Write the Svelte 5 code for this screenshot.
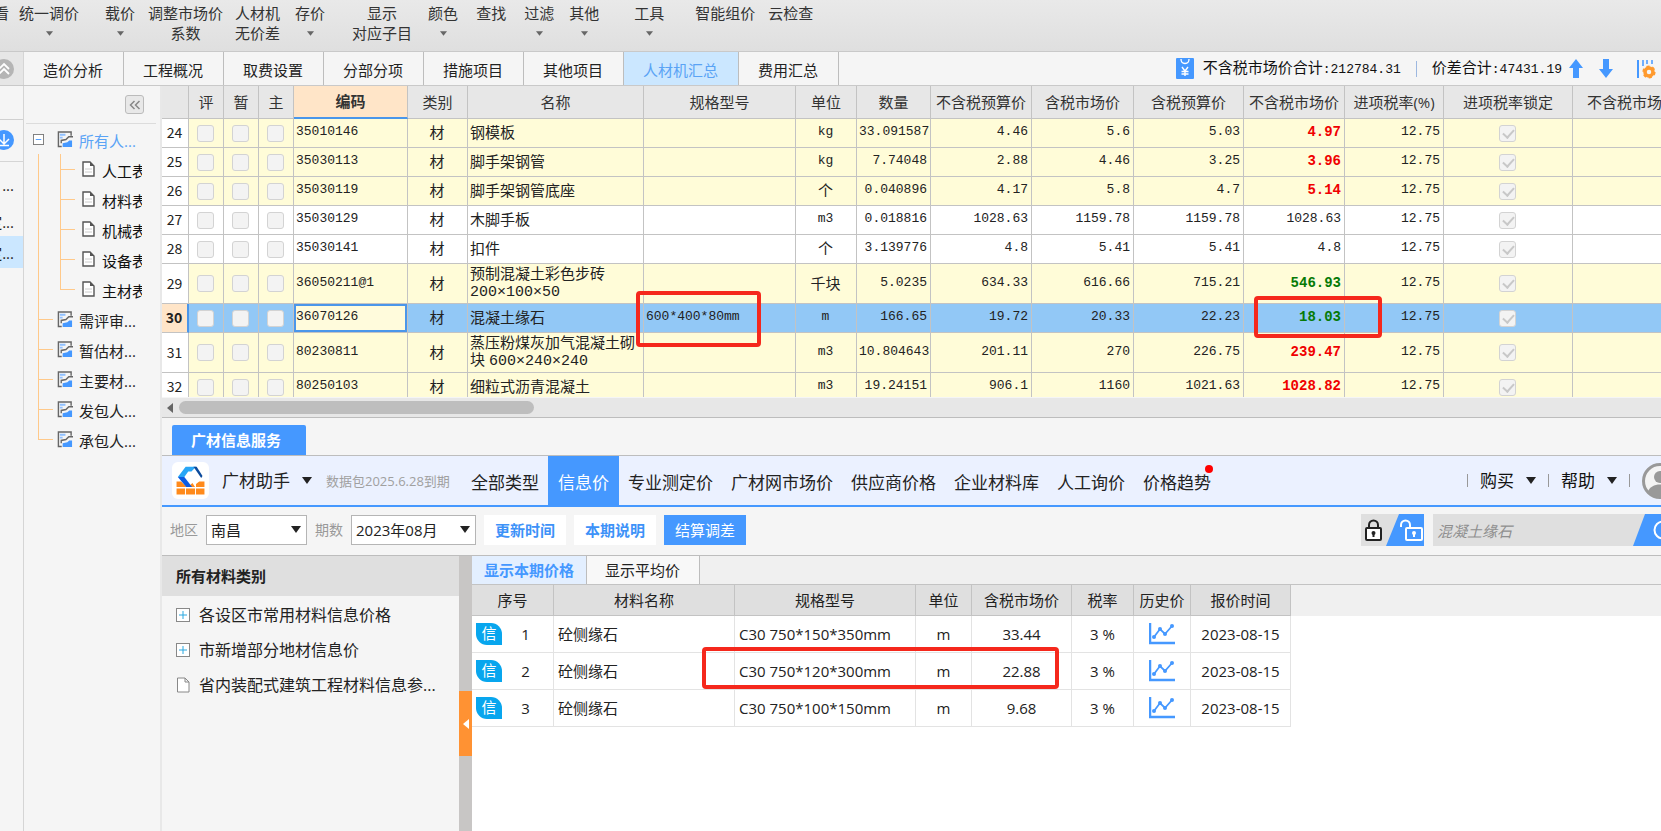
<script>
    const ribbon = [
        { lines: ["查看"], gap: 0 },
        { lines: ["统一调价"], arrow: true, gap: 10 },
        { lines: ["载价"], arrow: true, gap: 26 },
        { lines: ["调整市场价", "系数"], gap: 13 },
        { lines: ["人材机", "无价差"], gap: 12 },
        { lines: ["存价"], arrow: true, gap: 15 },
        { lines: ["显示", "对应子目"], gap: 27 },
        { lines: ["颜色"], arrow: true, gap: 16 },
        { lines: ["查找"], gap: 18 },
        { lines: ["过滤"], arrow: true, gap: 18 },
        { lines: ["其他"], arrow: true, gap: 15 },
        { lines: ["工具"], arrow: true, gap: 35 },
        { lines: ["智能组价"], gap: 31 },
        { lines: ["云检查"], gap: 13 },
    ];

    const tabs = ["造价分析", "工程概况", "取费设置", "分部分项", "措施项目", "其他项目", "人材机汇总", "费用汇总"];
    let activeTab = "人材机汇总";

    const tree = ["人工表", "材料表", "机械表", "设备表", "主材表"];
    const reports = ["需评审...", "暂估材...", "主要材...", "发包人...", "承包人..."];

    const columns = [
        { name: "", width: 27 },
        { name: "评", width: 35 },
        { name: "暂", width: 35 },
        { name: "主", width: 35 },
        { name: "编码", width: 114 },
        { name: "类别", width: 60 },
        { name: "名称", width: 176 },
        { name: "规格型号", width: 152 },
        { name: "单位", width: 61 },
        { name: "数量", width: 74 },
        { name: "不含税预算价", width: 101 },
        { name: "含税市场价", width: 102 },
        { name: "含税预算价", width: 110 },
        { name: "不含税市场价", width: 101 },
        { name: "进项税率(%)", width: 99 },
        { name: "进项税率锁定", width: 129 },
        { name: "不含税市场价合计", width: 148 },
    ];

    const rows = [
        { no: 24, code: "35010146", name: "钢模板", unit: "kg", qty: "33.091587", a: "4.46", b: "5.6", c: "5.03", d: "4.97", trend: "up" },
        { no: 25, code: "35030113", name: "脚手架钢管", unit: "kg", qty: "7.74048", a: "2.88", b: "4.46", c: "3.25", d: "3.96", trend: "up" },
        { no: 26, code: "35030119", name: "脚手架钢管底座", unit: "个", qty: "0.040896", a: "4.17", b: "5.8", c: "4.7", d: "5.14", trend: "up" },
        { no: 27, code: "35030129", name: "木脚手板", unit: "m3", qty: "0.018816", a: "1028.63", b: "1159.78", c: "1159.78", d: "1028.63" },
        { no: 28, code: "35030141", name: "扣件", unit: "个", qty: "3.139776", a: "4.8", b: "5.41", c: "5.41", d: "4.8" },
        { no: 29, code: "36050211@1", name: "预制混凝土彩色步砖", size: "200×100×50", unit: "千块", qty: "5.0235", a: "634.33", b: "616.66", c: "715.21", d: "546.93", trend: "down" },
        { no: 30, code: "36070126", name: "混凝土缘石", spec: "600*400*80mm", unit: "m", qty: "166.65", a: "19.72", b: "20.33", c: "22.23", d: "18.03", trend: "down" },
        { no: 31, code: "80230811", name: "蒸压粉煤灰加气混凝土砌块", size: "600×240×240", unit: "m3", qty: "10.804643", a: "201.11", b: "270", c: "226.75", d: "239.47", trend: "up" },
        { no: 32, code: "80250103", name: "细粒式沥青混凝土", unit: "m3", qty: "19.24151", a: "906.1", b: "1160", c: "1021.63", d: "1028.82", trend: "up" },
    ];
    let selectedRow = 30;

    const navItems = ["全部类型", "信息价", "专业测定价", "广材网市场价", "供应商价格", "企业材料库", "人工询价", "价格趋势"];
    let activeNav = "信息价";

    const categories = [
        { name: "各设区市常用材料信息价格", expandable: true },
        { name: "市新增部分地材信息价", expandable: true },
        { name: "省内装配式建筑工程材料信息参...", expandable: false },
    ];

    const priceColumns = [
        { name: "序号", width: 82 },
        { name: "材料名称", width: 181 },
        { name: "规格型号", width: 181 },
        { name: "单位", width: 56 },
        { name: "含税市场价", width: 100 },
        { name: "税率", width: 62 },
        { name: "历史价", width: 57 },
        { name: "报价时间", width: 100 },
    ];

    const prices = [
        { no: 1, spec: "C30 750*150*350mm", price: "33.44" },
        { no: 2, spec: "C30 750*120*300mm", price: "22.88", marked: true },
        { no: 3, spec: "C30 750*100*150mm", price: "9.68" },
    ];
</script>

{#snippet reportIcon()}
    <svg class="report-icon" viewBox="0 0 17 18" aria-hidden="true">
        <path d="M15 5V1H1.500v15.500H5" fill="none" stroke="#666" stroke-width="1.500" />
        <path d="M3 4h6M3 7h3" stroke="#8fc0ff" stroke-width="2" />
        <path d="M4.500 13V10l5-1 3-3H17" fill="none" stroke="#666" stroke-width="1.500" />
        <path d="M6 17v-4l5-1 2-2h3v7z" fill="#4598ff" />
    </svg>
{/snippet}

{#snippet fileIcon()}
    <svg class="file-icon" viewBox="0 0 13 16" aria-hidden="true">
        <path d="M1 1h7l4 4v10H1z" fill="#fff" stroke="#555" stroke-width="1.400" />
        <path d="M8 1v4h4z" fill="#555" />
        <path d="M3 8h7M3 11h7" stroke="#ccc" />
    </svg>
{/snippet}

{#snippet caret()}
    <svg class="caret" viewBox="0 0 10 7" aria-hidden="true"><path d="M0 0h10L5 7z" fill="#222" /></svg>
{/snippet}

<div class="app">
    <header class="ribbon">
        {#each ribbon as item}
            <button class="ribbon-item" style:margin-left="{item.gap}px">
                {#each item.lines as line}
                    <span>{line}</span>
                {/each}
                {#if item.arrow}
                    <svg class="drop" viewBox="0 0 6 4" aria-hidden="true"><path d="M0 0h6L3 4z" fill="#666" /></svg>
                {/if}
            </button>
        {/each}
    </header>

    <nav class="tabs">
        <button class="fold" aria-label="折叠">
            <svg viewBox="0 0 20 20" aria-hidden="true">
                <circle cx="10" cy="10" r="10" fill="#b5b5b5" />
                <path d="M5 10l5-5 5 5M5 15l5-5 5 5" fill="none" stroke="#fff" stroke-width="1.800" />
            </svg>
        </button>
        {#each tabs as tab}
            <button class="tab" class:active={tab === activeTab} on:click={() => (activeTab = tab)}>{tab}</button>
        {/each}
        <div class="totals">
            <svg class="bill" viewBox="0 0 18 21" aria-hidden="true">
                <rect width="18" height="21" rx="1" fill="#4598ff" />
                <path d="M5 1c0 6 8 6 8 0" fill="none" stroke="#fff" stroke-width="1.300" />
                <path d="M6 9l3 4 3-4M9 13v5M5.500 13.500h7M5.500 16h7" fill="none" stroke="#fff" stroke-width="1.400" />
            </svg>
            <span>不含税市场价合计<b>:212784.31</b></span>
            <i class="bar"></i>
            <span>价差合计<b>:47431.19</b></span>
            <svg class="arrow first" viewBox="0 0 14 19" aria-hidden="true"><path d="M7 0l7 9h-4v10H4V9H0z" fill="#4598ff" /></svg>
            <svg class="arrow second" viewBox="0 0 14 19" aria-hidden="true"><path d="M7 19l7-9h-4V0H4v10H0z" fill="#4598ff" /></svg>
            <svg class="settings" viewBox="0 0 24 20" aria-hidden="true">
                <path d="M1 1v18" stroke="#4598ff" stroke-width="2" />
                <path d="M6 1v6M10 1v4M15 1v4" stroke="#4598ff" stroke-width="1.500" />
                <circle cx="12" cy="13" r="4" fill="none" stroke="#ff9a2e" stroke-width="3.500" />
                <circle cx="12" cy="13" r="5.600" fill="none" stroke="#ff9a2e" stroke-width="2" stroke-dasharray="3 2.800" />
            </svg>
        </div>
    </nav>

    <div class="workspace">
        <aside class="rail">
            <div class="rail-top"></div>
            <div class="rail-icon">
                <svg viewBox="0 0 20 20" aria-hidden="true">
                    <circle cx="10" cy="10" r="10" fill="#4598ff" />
                    <path d="M10 4v9M5 9l5 5 5-5M5 15.500h10" fill="none" stroke="#fff" stroke-width="1.500" />
                </svg>
            </div>
            <div class="rail-row">...</div>
            <div class="rail-row">定...</div>
            <div class="rail-row current">定...</div>
        </aside>

        <aside class="tree">
            <div class="tree-head">
                <button class="collapse" aria-label="收起">
                    <svg viewBox="0 0 12 10" aria-hidden="true">
                        <path d="M5.500 1l-4 4 4 4M10.500 1l-4 4 4 4" fill="none" stroke="#888" stroke-width="1.500" />
                    </svg>
                </button>
            </div>
            <div class="root">
                <svg class="box" viewBox="0 0 12 12" aria-hidden="true">
                    <rect x=".5" y=".5" width="11" height="11" fill="#fff" stroke="#777" />
                    <path d="M3 6h6" stroke="#4598ff" />
                </svg>
                {@render reportIcon()}
                <span>所有人...</span>
            </div>
            <ul class="reports">
                <li class="nested">
                    <ul>
                        {#each tree as leaf}
                            <li class="leaf">{@render fileIcon()}<span>{leaf}</span></li>
                        {/each}
                    </ul>
                </li>
                {#each reports as report}
                    <li class="report">{@render reportIcon()}<span>{report}</span></li>
                {/each}
            </ul>
        </aside>

        <main>
            <div class="grid">
                <table>
                    <colgroup>
                        {#each columns as column}
                            <col style:width="{column.width}px" />
                        {/each}
                    </colgroup>
                    <thead>
                        <tr>
                            {#each columns as column}
                                <th class:sorted={column.name === "编码"}>{column.name}</th>
                            {/each}
                        </tr>
                    </thead>
                    <tbody>
                        {#each rows as row (row.no)}
                            <tr
                                class:plain={!row.trend}
                                class:tall={row.size}
                                class:selected={row.no === selectedRow}
                                on:click={() => (selectedRow = row.no)}
                            >
                                <td class="no">{row.no}</td>
                                <td class="center"><input type="checkbox" aria-label="评" /></td>
                                <td class="center"><input type="checkbox" aria-label="暂" /></td>
                                <td class="center"><input type="checkbox" aria-label="主" /></td>
                                <td class="num code">{row.code}</td>
                                <td class="center">材</td>
                                <td class="name">{row.name} {#if row.size}<span class="size">{row.size}</span>{/if}</td>
                                <td class="num anchor">
                                    {row.spec ?? ""}
                                    {#if row.spec}<i class="mark mark-spec"></i>{/if}
                                </td>
                                <td class="center" class:num={/^[a-z]/.test(row.unit)}>{row.unit}</td>
                                <td class="num right">{row.qty}</td>
                                <td class="num right">{row.a}</td>
                                <td class="num right">{row.b}</td>
                                <td class="num right">{row.c}</td>
                                <td class="num right anchor {row.trend ?? ''}">
                                    {row.d}
                                    {#if row.spec}<i class="mark mark-price"></i>{/if}
                                </td>
                                <td class="num right">12.75</td>
                                <td class="center"><input type="checkbox" checked disabled aria-label="锁定" /></td>
                                <td></td>
                            </tr>
                        {/each}
                    </tbody>
                </table>
            </div>
            <div class="scrollbar">
                <svg viewBox="0 0 6 10" aria-hidden="true"><path d="M6 0v10L0 5z" fill="#666" /></svg>
                <div class="thumb"></div>
            </div>

            <div class="service-tabs">
                <button>广材信息服务</button>
            </div>

            <div class="nav">
                <svg class="logo" viewBox="0 0 114 114" aria-hidden="true">
                    <rect width="114" height="114" rx="18" fill="#fff" />
                    <path d="M14 60h14l17 17H14zM49 77l14-12 8 12zM74 77V68l10-8h16v17zM14 82h26v18H14zM43 82h28v18H43zM74 82h26v18H74z" fill="#ff8a1c" />
                    <path d="M42 15h32L60 29H50L38 46H18z" fill="#29a6f6" />
                    <path d="M18 46h20l24 31H44z" fill="#0d5be0" />
                    <path d="M66 15h10l18 28-4 6z" fill="#0b4a9c" />
                </svg>
                <button class="brand">广材助手 {@render caret()}</button>
                <span class="expiry">数据包2025.6.28到期</span>
                <div class="nav-items">
                    {#each navItems as item}
                        <button class:active={item === activeNav} on:click={() => (activeNav = item)}>
                            {item}
                            {#if item === "价格趋势"}<i class="dot"></i>{/if}
                        </button>
                    {/each}
                </div>
                <div class="account">
                    <i></i>
                    <button>购买 {@render caret()}</button>
                    <i></i>
                    <button>帮助 {@render caret()}</button>
                    <i></i>
                    <svg class="avatar" viewBox="0 0 36 36" aria-hidden="true">
                        <circle cx="18" cy="18" r="16.500" fill="#f4f4f4" stroke="#999" stroke-width="3" />
                        <circle cx="18" cy="14" r="6" fill="#999" />
                        <path d="M6 29c2-10 22-10 24 0a16 16 0 0 1-24 0z" fill="#999" />
                    </svg>
                </div>
            </div>

            <div class="filters">
                <label for="area">地区</label>
                <div class="select area">
                    <select id="area"><option>南昌</option></select>
                    {@render caret()}
                </div>
                <label for="period">期数</label>
                <div class="select period">
                    <select id="period"><option>2023年08月</option></select>
                    {@render caret()}
                </div>
                <button>更新时间</button>
                <button>本期说明</button>
                <button class="primary">结算调差</button>
                <div class="search">
                    <svg class="locks" viewBox="0 0 63 32" aria-hidden="true">
                        <rect width="63" height="32" fill="#dfdfdf" />
                        <path d="M38 0h25v32H25z" fill="#4598ff" />
                        <rect x="5" y="14" width="15" height="12" rx="1" fill="#fff" stroke="#222" stroke-width="2" />
                        <path d="M8 14v-3a4.500 4.500 0 0 1 9 0v3" fill="none" stroke="#222" stroke-width="2" />
                        <path d="M12.500 18v5" stroke="#222" stroke-width="2" />
                        <circle cx="12.500" cy="19" r="2" fill="#222" />
                        <rect x="45" y="14" width="16" height="12" rx="1" fill="none" stroke="#fff" stroke-width="2" />
                        <path d="M40 13v-2a4.500 4.500 0 0 1 9 0v3" fill="none" stroke="#fff" stroke-width="2" />
                        <path d="M53 18v5" stroke="#fff" stroke-width="2" />
                        <circle cx="53" cy="19" r="2" fill="#fff" />
                    </svg>
                    <input type="text" placeholder="混凝土缘石" aria-label="搜索" />
                    <button class="go" aria-label="查询">
                        <svg viewBox="0 0 40 32" aria-hidden="true">
                            <path d="M12 0h28v32H0z" fill="#4598ff" />
                            <circle cx="30" cy="16" r="8.500" fill="none" stroke="#fff" stroke-width="2" />
                        </svg>
                    </button>
                </div>
            </div>

            <div class="bottom">
                <section class="categories">
                    <h2>所有材料类别</h2>
                    <ul>
                        {#each categories as category}
                            <li>
                                {#if category.expandable}
                                    <svg viewBox="0 0 14 16" aria-hidden="true">
                                        <rect x=".5" y="1.500" width="13" height="13" fill="#fff" stroke="#888" />
                                        <path d="M3 8h8M7 4v8" stroke="#2ba8e0" />
                                    </svg>
                                {:else}
                                    <svg viewBox="0 0 14 16" aria-hidden="true">
                                        <path d="M1.500 1H9l4 4v10H1.500z M9 1v4h4" fill="#fff" stroke="#888" />
                                    </svg>
                                {/if}
                                {category.name}
                            </li>
                        {/each}
                    </ul>
                </section>
                <div class="splitter">
                    <button aria-label="收起类别">
                        <svg viewBox="0 0 6 10" aria-hidden="true"><path d="M6 0v10L0 5z" fill="#fff" /></svg>
                    </button>
                </div>
                <section class="prices">
                    <div class="price-tabs">
                        <button class="active">显示本期价格</button>
                        <button>显示平均价</button>
                    </div>
                    <div class="price-grid">
                        <table>
                            <colgroup>
                                {#each priceColumns as column}
                                    <col style:width="{column.width}px" />
                                {/each}
                            </colgroup>
                            <thead>
                                <tr>
                                    {#each priceColumns as column}
                                        <th>{column.name}</th>
                                    {/each}
                                </tr>
                            </thead>
                            <tbody>
                                {#each prices as price (price.no)}
                                    <tr>
                                        <td class="index"><div><span class="badge">信</span><span class="seq">{price.no}</span></div></td>
                                        <td>砼侧缘石</td>
                                        <td class="anchor">
                                            {price.spec}
                                            {#if price.marked}<i class="mark mark-row"></i>{/if}
                                        </td>
                                        <td class="center">m</td>
                                        <td class="center">{price.price}</td>
                                        <td class="center">3 %</td>
                                        <td class="center">
                                            <svg class="chart" viewBox="0 0 26 23" aria-hidden="true">
                                                <path d="M1 0v20h25" fill="none" stroke="#4598ff" stroke-width="2.500" />
                                                <path d="M5 14l6-8 5 5 7-8" fill="none" stroke="#4598ff" stroke-width="1.800" />
                                                <g fill="#4598ff">
                                                    <circle cx="5" cy="14" r="2" />
                                                    <circle cx="11" cy="6" r="2" />
                                                    <circle cx="16" cy="11" r="2" />
                                                    <circle cx="23" cy="3" r="2" />
                                                </g>
                                            </svg>
                                        </td>
                                        <td class="center">2023-08-15</td>
                                    </tr>
                                {/each}
                            </tbody>
                        </table>
                    </div>
                </section>
            </div>
        </main>
    </div>
</div>

<style>
    :global(body) {
        overflow: hidden;
    }
    .app {
        height: 100vh;
        overflow: hidden;
        display: flex;
        flex-direction: column;
        background: #f5f5f5;
        color: #222;
        font: 15px/20px "Open Sans", "Noto Sans CJK SC", sans-serif;
    }
    .app :global(*) {
        box-sizing: border-box;
    }
    svg {
        display: block;
        flex: none;
    }
    button {
        font: inherit;
        color: inherit;
        border: none;
        background: none;
        padding: 0;
        white-space: nowrap;
        flex: none;
    }
    ul {
        list-style: none;
        margin: 0;
        padding: 0;
    }

    .ribbon {
        flex: none;
        display: flex;
        align-items: flex-start;
        height: 52px;
        padding-top: 3px;
        margin-left: -21px;
        background: linear-gradient(#e9e9e9, #dfdfdf);
        border-bottom: 1px solid #c9c9c9;
    }
    .ribbon-item {
        display: flex;
        flex-direction: column;
        align-items: center;
        color: #333;
    }
    .drop {
        width: 7px;
        height: 5px;
        margin-top: 8px;
    }

    .tabs {
        flex: none;
        display: flex;
        height: 34px;
        border-bottom: 1px solid #c9c9c9;
    }
    .fold {
        width: 24px;
        background: #e6e6e6;
        border-right: 1px solid #d5d5d5;
    }
    .fold svg {
        width: 20px;
        margin-left: -6px;
    }
    .tab {
        padding: 3px 20px 0 19px;
        border-right: 1px solid #bdbdbd;
    }
    .tab.active {
        background: #cbe7ff;
        color: #5aa3f5;
    }
    .totals {
        flex: 1;
        min-width: 0;
        display: flex;
        align-items: center;
        justify-content: flex-end;
        white-space: nowrap;
        gap: 9px;
        color: #111;
    }
    .totals b {
        font: 13px/20px "Liberation Mono", monospace;
    }
    .bill {
        width: 18px;
        height: 21px;
    }
    .bar {
        width: 1px;
        height: 16px;
        margin: 0 6px;
        background: #9db8e0;
    }
    .arrow {
        width: 14px;
        height: 19px;
    }
    .first {
        margin-left: -2px;
    }
    .second {
        margin: 0 15px 0 7px;
    }
    .settings {
        width: 24px;
        height: 20px;
    }

    .workspace {
        flex: 1;
        min-height: 0;
        display: flex;
    }
    .rail {
        flex: none;
        width: 24px;
        overflow: hidden;
        border-right: 1px solid #d5d5d5;
    }
    .rail-top {
        height: 34px;
        border-bottom: 1px solid #d0d0d0;
    }
    .rail-icon {
        height: 42px;
        padding: 10px 0;
        border-bottom: 1px solid #d5d5d5;
    }
    .rail-icon svg {
        width: 20px;
        margin-left: -6px;
    }
    .rail-row {
        display: flex;
        align-items: center;
        justify-content: flex-end;
        height: 37px;
        padding: 8px 9px 0 0;
    }
    .rail-row.current {
        height: 32px;
        padding-top: 2px;
        background: #cbe7ff;
    }
    .tree {
        flex: none;
        width: 138px;
        padding: 0 4px 0 2px;
        border-right: 2px solid #e8e8e8;
    }
    .tree-head {
        display: flex;
        justify-content: flex-end;
        height: 38px;
        padding: 9px 12px 0 0;
        border-bottom: 1px solid #dcdcdc;
    }
    .collapse {
        display: grid;
        place-items: center;
        width: 19px;
        height: 19px;
        border: 1px solid #bbb;
        border-radius: 3px;
        background: #e8e8e8;
    }
    .collapse svg {
        width: 12px;
        height: 10px;
    }
    .root {
        display: flex;
        align-items: center;
        height: 30px;
        padding-left: 7px;
        color: #5aa3f5;
        white-space: nowrap;
    }
    .root .box {
        width: 11px;
        height: 11px;
        margin-right: 13px;
    }
    .report-icon {
        width: 16px;
        height: 17px;
        margin-right: 6px;
    }
    .file-icon {
        width: 13px;
        height: 16px;
        margin-right: 7px;
    }
    .root span,
    .report span,
    .leaf span {
        padding-top: 4px;
    }
    .reports {
        margin-left: 12px;
        background: linear-gradient(#ffc98a, #ffc98a) 0 0 / 1px calc(100% - 15px) no-repeat;
    }
    .nested ul {
        margin-left: 22px;
        background: linear-gradient(#ffc98a, #ffc98a) 0 0 / 1px calc(100% - 15px) no-repeat;
    }
    .leaf,
    .report {
        display: flex;
        align-items: center;
        height: 30px;
        white-space: nowrap;
        background: linear-gradient(#ffc98a, #ffc98a) 0 15px / 15px 1px no-repeat;
        padding-left: 19px;
    }
    .leaf {
        padding-left: 22px;
        margin-right: 14px;
        overflow: hidden;
        color: #111;
    }

    main {
        flex: 1;
        min-width: 0;
        display: flex;
        flex-direction: column;
    }
    table {
        table-layout: fixed;
        width: 1px;
        border-collapse: separate;
        border-spacing: 0;
    }
    th,
    td {
        padding: 0 3px;
        white-space: nowrap;
        border: 0 solid #c3c3c3;
        border-width: 0 1px 1px 0;
    }
    .center {
        text-align: center;
    }
    .right {
        text-align: right;
    }
    .anchor {
        position: relative;
    }

    .grid {
        flex: none;
        height: 311px;
        overflow: hidden;
        background: #fff;
    }
    .grid th {
        height: 33px;
        padding-bottom: 1px;
        overflow: hidden;
        background: #e7e7e7;
        font-weight: 400;
        color: #333;
    }
    .grid th:last-child {
        text-align: left;
        padding-left: 14px;
    }
    .grid th.sorted {
        background: #ffe5c8;
        border-bottom: 2px solid #4a96ea;
        font-weight: 700;
    }
    .grid td {
        padding: 0 3px 2px 2px;
    }
    .grid tbody tr {
        height: 29px;
        background: #fffcd8;
    }
    .grid tbody tr.plain {
        background: #fff;
    }
    .grid tbody tr.tall {
        height: 40px;
    }
    .grid tbody tr.selected {
        background: #92c8f6;
    }
    .grid .no {
        background: #fff;
        font-family: "Noto Sans CJK SC", sans-serif;
        font-size: 14px;
        text-align: center;
    }
    .selected .no {
        background: #ffe5c8;
        border-right: 2px solid #4a96ea;
        font-weight: 700;
    }
    .selected .code {
        background: #fffbdc;
        box-shadow: inset 0 0 0 2px #4a96ea;
    }
    .num {
        font-family: "Liberation Mono", monospace;
        font-size: 13px;
    }
    .size {
        font-family: "Liberation Mono", monospace;
    }
    .name {
        line-height: 17px;
        white-space: normal;
    }
    .up,
    .down {
        font-size: 14px;
        font-weight: 700;
    }
    .up {
        color: #f00000;
    }
    .down {
        color: #067a06;
    }
    input[type="checkbox"] {
        appearance: none;
        display: block;
        width: 17px;
        height: 17px;
        margin: 2px auto 0;
        border: 1px solid #d3d3d3;
        border-radius: 3px;
        background: #f3f3f3;
    }
    input[type="checkbox"]:checked::after {
        content: "";
        display: block;
        width: 5px;
        height: 9px;
        margin: 1px 0 0 5px;
        border: solid #c8c8c8;
        border-width: 0 2px 2px 0;
        transform: rotate(42deg);
    }
    .mark {
        position: absolute;
        z-index: 1;
        border: 4px solid #f5281c;
        border-radius: 4px;
    }
    .mark-spec {
        left: -8px;
        top: -13px;
        width: 125px;
        height: 56px;
    }
    .mark-price {
        left: 10px;
        top: -8px;
        width: 128px;
        height: 42px;
    }
    .mark-row {
        left: -33px;
        top: -6px;
        width: 357px;
        height: 42px;
    }

    .scrollbar {
        flex: none;
        display: flex;
        align-items: center;
        gap: 6px;
        height: 21px;
        padding-left: 5px;
        background: #e7e7e7;
        border-bottom: 1px solid #bdbdbd;
        border-top: 1px solid #f5f5f5;
    }
    .scrollbar svg {
        width: 6px;
        height: 10px;
    }
    .thumb {
        width: 355px;
        height: 13px;
        border-radius: 7px;
        background: #bebebe;
    }

    .service-tabs {
        flex: none;
        padding: 7px 10px 0;
        border-bottom: 1px solid #bdbdbd;
    }
    .service-tabs button {
        display: block;
        height: 30px;
        padding: 0 25px 0 19px;
        border-radius: 2px 2px 0 0;
        background: #4598ff;
        color: #fff;
        font-weight: 700;
    }

    .nav {
        flex: none;
        display: flex;
        align-items: center;
        height: 51px;
        padding-left: 10px;
        background: #ebf1ff;
        border-bottom: 2px solid #4598ff;
        font-size: 17px;
    }
    .logo {
        width: 37px;
        height: 37px;
        margin-right: 13px;
    }
    .caret {
        width: 10px;
        height: 7px;
    }
    .brand,
    .account button {
        display: flex;
        align-items: center;
        gap: 12px;
    }
    .expiry {
        flex: none;
        width: 122px;
        margin: 0 14px;
        font-size: 13px;
        color: #a0a0a0;
        white-space: nowrap;
    }
    .nav-items {
        display: flex;
        align-self: stretch;
    }
    .nav-items button {
        position: relative;
        padding: 4px 9px 0;
    }
    .nav-items .active {
        padding: 4px 10px 0;
        background: #4598ff;
        color: #fff;
    }
    .dot {
        position: absolute;
        top: 9px;
        right: 7px;
        width: 8px;
        height: 8px;
        border-radius: 50%;
        background: #f00;
    }
    .account {
        flex: 1;
        display: flex;
        align-items: center;
        justify-content: flex-end;
        gap: 12px;
        margin-right: -17px;
        color: #111;
    }
    .account i {
        width: 1px;
        height: 13px;
        background: #999;
    }
    .avatar {
        width: 36px;
        height: 36px;
    }

    .filters {
        flex: none;
        display: flex;
        align-items: center;
        height: 49px;
        padding: 0 0 2px 8px;
        gap: 8px;
        border-bottom: 1px solid #bdbdbd;
    }
    .filters label {
        color: #999;
        font-size: 14px;
    }
    .select {
        position: relative;
        height: 30px;
    }
    .select .caret {
        position: absolute;
        right: 6px;
        top: 11px;
        pointer-events: none;
    }
    select {
        appearance: none;
        width: 100%;
        height: 100%;
        padding: 0 4px;
        border: 1px solid #b5b5b5;
        border-radius: 0;
        background: #fff;
        color: #222;
        font: inherit;
    }
    .area {
        width: 101px;
    }
    .period {
        width: 125px;
    }
    .filters > button {
        height: 30px;
        padding: 0 11px;
        background: #fff;
        color: #3d92f8;
        font-weight: 700;
    }
    .filters .primary {
        background: #4598ff;
        color: #fff;
        font-weight: 400;
    }
    .search {
        flex: 1;
        display: flex;
        justify-content: flex-end;
        height: 32px;
    }
    .locks {
        width: 63px;
        height: 32px;
        margin-right: 9px;
    }
    .search input {
        width: 212px;
        padding: 0 4px;
        border: none;
        border-radius: 0;
        background: #dfdfdf;
        font: italic 15px "Noto Sans CJK SC", sans-serif;
    }
    .search input::placeholder {
        color: #8f8f8f;
    }
    .search .go {
        width: 28px;
        margin-left: -12px;
        overflow: hidden;
    }
    .go svg {
        width: 40px;
        height: 32px;
    }

    .bottom {
        flex: 1;
        min-height: 0;
        display: flex;
    }
    .categories {
        flex: none;
        width: 297px;
    }
    .categories h2 {
        margin: 0;
        padding: 10px 14px;
        background: #dfdfdf;
        font-size: 15px;
        line-height: 20px;
    }
    .categories ul {
        padding-top: 1px;
    }
    .categories li {
        display: flex;
        align-items: center;
        gap: 9px;
        height: 35px;
        padding-left: 14px;
        font-size: 16px;
        white-space: nowrap;
    }
    .categories li svg {
        width: 14px;
        height: 16px;
    }
    .splitter {
        flex: none;
        width: 13px;
        padding-top: 135px;
        background: #c8c6c5;
    }
    .splitter button {
        display: grid;
        place-items: center;
        width: 13px;
        height: 65px;
        background: #ff9233;
    }
    .splitter svg {
        width: 6px;
        height: 10px;
    }
    .prices {
        flex: 1;
        min-width: 0;
        background: #fff;
    }
    .price-tabs {
        display: flex;
        height: 29px;
        background: #f0f0f0;
        border-bottom: 1px solid #c3c3c3;
    }
    .price-tabs button {
        padding: 0 19px 0 18px;
        background: #f8f8f8;
        border-right: 1px solid #bdbdbd;
    }
    .price-tabs .active {
        padding: 0 12px;
        background: #e3efff;
        color: #4598ff;
        font-weight: 700;
    }
    .price-grid {
        background: linear-gradient(#f0f0f0, #f0f0f0) 0 0 / 100% 31px no-repeat;
    }
    .price-grid th {
        height: 31px;
        padding: 0;
        background: #dfdfdf;
        font-weight: 400;
    }
    .price-grid td {
        height: 37px;
        padding: 0 4px;
        border-color: #e3e3e3;
    }
    .index div {
        display: flex;
        align-items: center;
    }
    .badge {
        width: 28px;
        height: 22px;
        border-radius: 0 11px 0 11px;
        background: #08a6ee;
        color: #fff;
        text-align: center;
    }
    .seq {
        width: 51px;
        text-align: center;
    }
    .chart {
        width: 26px;
        height: 23px;
        margin: 0 auto;
    }
</style>
